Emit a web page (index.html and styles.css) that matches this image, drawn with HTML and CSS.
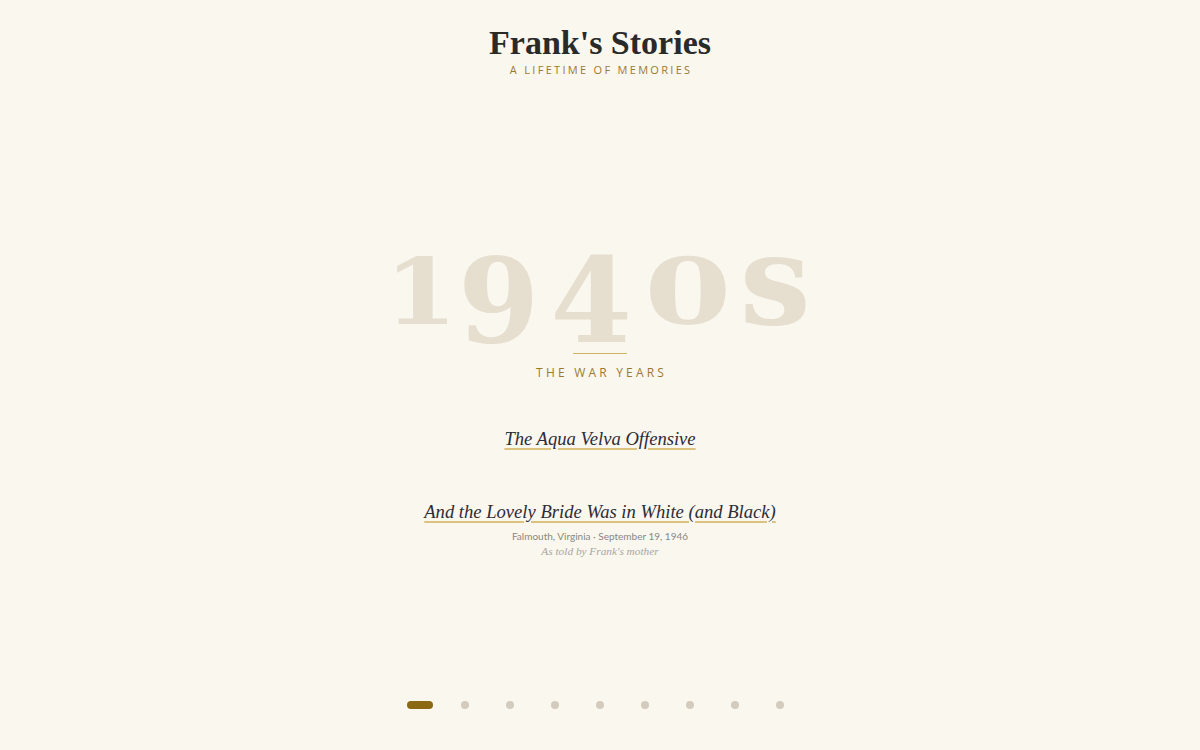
FILE: index.html
```html
<!DOCTYPE html>
<html lang="en">
<head>
<meta charset="utf-8">
<title>Frank's Stories</title>
<link rel="stylesheet" href="styles.css">
</head>
<body>
  <header class="site-header">
    <h1 class="site-title">Frank's Stories</h1>
    <p class="site-tagline">A Lifetime of Memories</p>
  </header>

  <main class="decade">
    <div class="decade-year" aria-label="1940s"><span class="fig fig-short fig-one">1</span><span class="fig fig-long fig-nine">9</span><span class="fig fig-long fig-four">4</span><span class="fig fig-short fig-zero">0</span><span class="fig fig-s">s</span></div>
    <div class="decade-rule"></div>
    <p class="decade-name">The War Years</p>

    <ul class="story-list">
      <li class="story">
        <a class="story-title" href="#">The Aqua Velva Offensive</a>
      </li>
      <li class="story">
        <a class="story-title" href="#">And the Lovely Bride Was in White (and Black)</a>
        <p class="story-meta">Falmouth, Virginia · September 19, 1946</p>
        <p class="story-teller">As told by Frank's mother</p>
      </li>
    </ul>
  </main>

  <nav class="decade-nav" aria-label="Decades">
    <button class="nav-slot is-active" aria-label="1940s"><span class="nav-dot"></span></button>
    <button class="nav-slot" aria-label="1950s"><span class="nav-dot"></span></button>
    <button class="nav-slot" aria-label="1960s"><span class="nav-dot"></span></button>
    <button class="nav-slot" aria-label="1970s"><span class="nav-dot"></span></button>
    <button class="nav-slot" aria-label="1980s"><span class="nav-dot"></span></button>
    <button class="nav-slot" aria-label="1990s"><span class="nav-dot"></span></button>
    <button class="nav-slot" aria-label="2000s"><span class="nav-dot"></span></button>
    <button class="nav-slot" aria-label="2010s"><span class="nav-dot"></span></button>
    <button class="nav-slot" aria-label="2020s"><span class="nav-dot"></span></button>
  </nav>
</body>
</html>
```

FILE: styles.css
```css
* {
  box-sizing: border-box;
}

html,
body {
  height: 100%;
}

body {
  margin: 0;
  background: #faf7ef;
  color: #2b2b2b;
  font-family: "Liberation Serif", "Times New Roman", serif;
  display: flex;
  flex-direction: column;
  align-items: center;
  text-align: center;
}

/* ---------- header ---------- */
.site-header {
  padding-top: 24px;
}

.site-title {
  margin: 0;
  font-size: 34px;
  line-height: 38px;
  font-weight: 700;
  color: #2a2a2a;
}

.site-tagline {
  margin: 0;
  padding-left: 2.3px;
  font-family: "Open Sans", "Noto Sans", sans-serif;
  font-size: 11px;
  line-height: 15px;
  letter-spacing: 2.3px;
  text-transform: uppercase;
  color: #9b7a2f;
}

/* ---------- decade ---------- */
.decade {
  flex: 1;
  display: flex;
  flex-direction: column;
  align-items: center;
  padding-top: 159px;
}

/* old-style figures: short 1 / 0, descending 9 / 4 */
.decade-year {
  font-family: "DejaVu Serif", serif;
  font-weight: 700;
  font-size: 91.5px;
  line-height: 88px;
  color: #e6dfd0;
  white-space: nowrap;
}

.fig {
  display: inline-block;
}

.fig-short {
  font-size: 91.5px;
}

.fig-long {
  font-size: 117px;
  vertical-align: -18px;
}

.fig-s {
  font-size: 126px;
}

.fig-one {
  margin-right: -3px;
  transform: scaleX(1.15);
}

.fig-nine {
  margin-left: 8px;
}

.fig-four {
  margin-left: 11px;
}

.fig-zero {
  margin-left: 24px;
  transform: scaleX(1.37);
}

.fig-s {
  margin-left: 20px;
}

.decade-rule {
  width: 54px;
  height: 1px;
  margin-top: 7.5px;
  background: #d2b466;
}

.decade-name {
  margin: 11px 0 0;
  padding-left: 3.2px;
  font-family: "Open Sans", "Noto Sans", sans-serif;
  font-size: 12px;
  line-height: 16px;
  letter-spacing: 3.2px;
  text-transform: uppercase;
  color: #9b7a2f;
}

/* ---------- stories ---------- */
.story-list {
  list-style: none;
  margin: 46px 0 0;
  padding: 0;
  display: flex;
  flex-direction: column;
  align-items: center;
  gap: 49px;
}

.story {
  display: flex;
  flex-direction: column;
  align-items: center;
}

.story-title {
  font-style: italic;
  font-size: 18.6px;
  line-height: 24px;
  color: #2c2c38;
  text-decoration: underline;
  text-decoration-color: #dcc27f;
  text-decoration-thickness: 1.5px;
  text-underline-offset: 3px;
}

.story-meta {
  margin: 6px 0 0;
  font-family: Lato, "Open Sans", sans-serif;
  font-size: 10px;
  line-height: 13px;
  color: #8a8782;
}

.story-teller {
  margin: 2px 0 0;
  font-style: italic;
  font-size: 11.3px;
  line-height: 13px;
  color: #a9a6a0;
}

/* ---------- decade dots ---------- */
.decade-nav {
  display: flex;
  padding-bottom: 41px;
}

.nav-slot {
  width: 45px;
  height: 8px;
  padding: 0;
  border: 0;
  background: none;
  display: flex;
  justify-content: center;
  cursor: pointer;
}

.nav-dot {
  width: 8px;
  height: 8px;
  border-radius: 4px;
  background: #d3cbbd;
}

.is-active .nav-dot {
  width: 26px;
  background: #8b6914;
}
```
